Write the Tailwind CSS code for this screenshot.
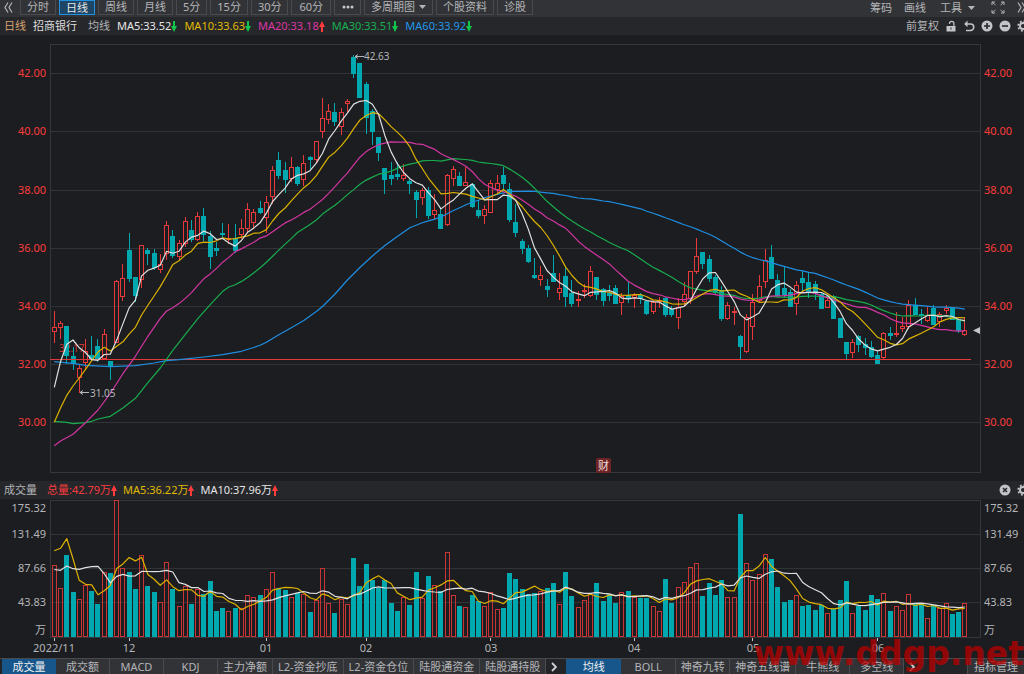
<!DOCTYPE html>
<html lang="zh-CN">
<head>
    <meta charset="UTF-8">
    <meta name="viewport" content="width=device-width, initial-scale=1.0">
    <title>招商银行 日线</title>
    <script src="https://cdn.jsdelivr.net/npm/@tailwindcss/browser@4"></script>
</head>
<body class="bg-[#1c1d20] text-[#b4b5b8] text-[11px] leading-[16px] font-['Noto_Sans','Noto_Sans_CJK_SC',sans-serif]">
<div class="relative flex h-screen flex-col overflow-hidden whitespace-nowrap">

    <!-- Toolbar -->
    <nav class="flex h-[17px] shrink-0 items-start justify-between bg-[#323337]">
        <div class="flex items-start gap-[3px]">
            <button class="flex h-[15px] w-[17px] items-center pl-1" aria-label="向左">
                <svg width="9" height="11" viewBox="0 0 9 11" fill="none" stroke="#b4b5b8" stroke-width="1.2"><path d="M4 .5 1 5.5l3 5M8 .5 5 5.5l3 5"/></svg>
            </button>
            <button class="h-[15px] border border-t-0 border-[#494a4e] px-1.5 leading-[14px]">分时</button>
            <button class="h-[15px] border border-[#2191e0] bg-[#1d4565] px-1.5 leading-[13px] text-[#e8e8e8]">日线</button>
            <button class="h-[15px] border border-t-0 border-[#494a4e] px-1.5 leading-[14px]">周线</button>
            <button class="h-[15px] border border-t-0 border-[#494a4e] px-1.5 leading-[14px]">月线</button>
            <button class="h-[15px] border border-t-0 border-[#494a4e] px-1.5 leading-[14px]">5分</button>
            <button class="h-[15px] border border-t-0 border-[#494a4e] px-1.5 leading-[14px]">15分</button>
            <button class="h-[15px] border border-t-0 border-[#494a4e] px-1.5 leading-[14px]">30分</button>
            <button class="h-[15px] border border-t-0 border-[#494a4e] px-[7px] leading-[14px]">60分</button>
            <button class="flex h-[15px] w-[27px] items-center justify-center border border-t-0 border-[#494a4e]" aria-label="更多">
                <svg width="12" height="4" viewBox="0 0 12 4" fill="#c8c9cb"><circle cx="2" cy="2" r="1.5"/><circle cx="6" cy="2" r="1.5"/><circle cx="10" cy="2" r="1.5"/></svg>
            </button>
            <button class="flex h-[15px] items-center gap-1 border border-t-0 border-[#494a4e] px-1.5 leading-[14px]">多周期图
                <svg width="7" height="4" viewBox="0 0 7 4" fill="#b4b5b8"><path d="M0 0h7L3.5 4z"/></svg>
            </button>
            <button class="h-[15px] border border-t-0 border-[#494a4e] px-1.5 leading-[14px]">个股资料</button>
            <button class="h-[15px] border border-t-0 border-[#494a4e] px-1.5 leading-[14px]">诊股</button>
        </div>
        <div class="flex h-[15px] items-center leading-[14px]">
            <button class="mr-3">筹码</button>
            <button class="mr-[14px]">画线</button>
            <button class="mr-4 flex items-center gap-1.5">工具
                <svg width="7" height="4" viewBox="0 0 7 4" fill="#b4b5b8"><path d="M0 0h7L3.5 4z"/></svg>
            </button>
            <button class="mr-3" aria-label="全屏">
                <svg width="14" height="13" viewBox="0 0 14 13" fill="none" stroke="#b4b5b8"><path d="M1 4V1h3M1 1l3.5 3M10 1h3v3M13 1 9.5 4M1 9v3h3M1 12l3.5-3M10 12h3V9M13 12 9.5 9"/></svg>
            </button>
            <button class="w-[7px] overflow-hidden" aria-label="向右">
                <svg class="max-w-none" width="9" height="11" viewBox="0 0 9 11" fill="none" stroke="#b4b5b8" stroke-width="1.2"><path d="m1 .5 3 5-3 5M5 .5l3 5-3 5"/></svg>
            </button>
        </div>
    </nav>

    <!-- Averages -->
    <header class="flex h-[18px] shrink-0 items-center justify-between bg-[#26272b] pl-1 leading-[18px]">
        <div class="flex items-center gap-[7px]">
            <span class="text-[#d9a470]">日线</span>
            <span class="text-[#dcdcdc]">招商银行</span>
            <span class="ml-1">均线</span>
            <span class="flex items-center text-[#e6e6e6]">MA5:33.52<svg width="6" height="11" viewBox="0 0 6 11" fill="#12c44c"><path d="M2 0h2v5h2L3 11 0 5h2z"/></svg></span>
            <span class="flex items-center text-[#e0bb00]">MA10:33.63<svg width="6" height="11" viewBox="0 0 6 11" fill="#12c44c"><path d="M2 0h2v5h2L3 11 0 5h2z"/></svg></span>
            <span class="flex items-center text-[#dc36a4]">MA20:33.18<svg width="6" height="11" viewBox="0 0 6 11" fill="#ff3b3b"><path d="M2 11h2V6h2L3 0 0 6h2z"/></svg></span>
            <span class="flex items-center text-[#18b050]">MA30:33.51<svg width="6" height="11" viewBox="0 0 6 11" fill="#12c44c"><path d="M2 0h2v5h2L3 11 0 5h2z"/></svg></span>
            <span class="flex items-center text-[#2196ea]">MA60:33.92<svg width="6" height="11" viewBox="0 0 6 11" fill="#12c44c"><path d="M2 0h2v5h2L3 11 0 5h2z"/></svg></span>
        </div>
        <div class="flex items-center gap-1.5">
            <button>前复权</button>
            <button aria-label="锁定"><svg width="12" height="12" viewBox="0 0 12 12"><path d="M1.5 6h9v5.5h-9z" fill="#c3c4c7"/><path d="M4.5 4V3.500a2.200 2.200 0 0 1 4.400 0V6" fill="none" stroke="#c3c4c7" stroke-width="1.2"/><path d="M5.500 7.500h1v2h-1z" fill="#26272b"/></svg></button>
            <button aria-label="撤销"><svg width="12" height="12" viewBox="0 0 12 12" fill="none" stroke="#c3c4c7" stroke-width="1.6"><path d="M2 4h5.500a3 3 0 0 1 0 6.500H3"/><path d="M4.500.500 1.200 4l3.300 3.300z" fill="#c3c4c7" stroke="none"/></svg></button>
            <button aria-label="放大"><svg width="12" height="12" viewBox="0 0 12 12"><circle cx="6" cy="6" r="5.500" fill="#c3c4c7"/><path d="M6 3v6M3 6h6" stroke="#26272b" stroke-width="1.6"/></svg></button>
            <button aria-label="缩小"><svg width="12" height="12" viewBox="0 0 12 12"><circle cx="6" cy="6" r="5.500" fill="#c3c4c7"/><path d="M3 6h6" stroke="#26272b" stroke-width="1.6"/></svg></button>
            <button class="w-[7px] overflow-hidden" aria-label="设置"><svg class="max-w-none" width="12" height="12" viewBox="0 0 12 12" fill="none" stroke="#c3c4c7"><circle cx="6" cy="6" r="3" stroke-width="2"/><circle cx="6" cy="6" r="4.8" stroke-width="1.8" stroke-dasharray="1.88 1.89"/></svg></button>
        </div>
    </header>

    <!-- Candles -->
    <section class="flex min-h-0 flex-1 pt-[9px] pb-2">
        <div class="grid h-[95%] w-[50px] shrink-0 grid-rows-7 items-center pr-1 text-right text-[#fa3c3c]">
            <span>42.00</span><span>40.00</span><span>38.00</span><span>36.00</span><span>34.00</span><span>32.00</span><span>30.00</span>
        </div>
        <svg id="price" class="min-w-0 flex-1" viewBox="50 44 931 429" preserveAspectRatio="none"></svg>
        <div class="grid h-[95%] w-[43px] shrink-0 grid-rows-7 items-center pl-[3px] text-[#fa3c3c]">
            <span>42.00</span><span>40.00</span><span>38.00</span><span>36.00</span><span>34.00</span><span>32.00</span><span>30.00</span>
        </div>
    </section>

    <!-- Volume -->
    <header class="flex h-[18px] shrink-0 items-center justify-between bg-[#26272b] pl-1 leading-[18px]">
        <div class="flex items-center gap-1.5">
            <span class="mr-1">成交量</span>
            <span class="flex items-center text-[#fa3c3c]">总量:42.79万<svg width="6" height="11" viewBox="0 0 6 11" fill="#ff3b3b"><path d="M2 11h2V6h2L3 0 0 6h2z"/></svg></span>
            <span class="flex items-center text-[#e0bb00]">MA5:36.22万<svg width="6" height="11" viewBox="0 0 6 11" fill="#ff3b3b"><path d="M2 11h2V6h2L3 0 0 6h2z"/></svg></span>
            <span class="flex items-center text-[#e6e6e6]">MA10:37.96万<svg width="6" height="11" viewBox="0 0 6 11" fill="#ff3b3b"><path d="M2 11h2V6h2L3 0 0 6h2z"/></svg></span>
        </div>
        <div class="flex items-center gap-1.5">
            <button aria-label="关闭"><svg width="12" height="12" viewBox="0 0 12 12"><circle cx="6" cy="6" r="5.5" fill="#c3c4c7"/><path d="m4 4 4 4M8 4 4 8" stroke="#26272b" stroke-width="1.5"/></svg></button>
            <button class="w-[7px] overflow-hidden" aria-label="设置"><svg class="max-w-none" width="12" height="12" viewBox="0 0 12 12" fill="none" stroke="#c3c4c7"><circle cx="6" cy="6" r="3" stroke-width="2"/><circle cx="6" cy="6" r="4.8" stroke-width="1.8" stroke-dasharray="1.88 1.89"/></svg></button>
        </div>
    </header>
    <section class="flex h-[159px] shrink-0 pt-px">
        <div class="flex w-[50px] shrink-0 flex-col pr-1 text-right">
            <span class="h-[17px]">175.32</span>
            <span class="h-[34px] leading-[34px]">131.49</span>
            <span class="h-[34px] leading-[34px]">87.66</span>
            <span class="h-[34px] leading-[34px]">43.83</span>
            <span class="h-[22px] leading-[22px]">万</span>
        </div>
        <svg id="volume" class="min-w-0 flex-1 overflow-visible" viewBox="50 500 931 158" preserveAspectRatio="none"></svg>
        <div class="flex w-[43px] shrink-0 flex-col pl-[3px]">
            <span class="h-[17px]">175.32</span>
            <span class="h-[34px] leading-[34px]">131.49</span>
            <span class="h-[34px] leading-[34px]">87.66</span>
            <span class="h-[34px] leading-[34px]">43.83</span>
            <span class="h-[22px] leading-[22px]">万</span>
        </div>
    </section>

    <!-- Indicator tabs -->
    <footer class="flex h-4 shrink-0 justify-between border-t border-[#494a4e] bg-[#232427] pl-0.5 leading-[14px]">
        <div class="flex">
            <button class="min-w-[54px] bg-[#17568a] text-[#f0f0f0]">成交量</button>
            <button class="min-w-[54px] border-r border-[#4a4b4f] bg-[#323337]">成交额</button>
            <button class="min-w-[54px] border-r border-[#4a4b4f] bg-[#323337]">MACD</button>
            <button class="min-w-[54px] border-r border-[#4a4b4f] bg-[#323337]">KDJ</button>
            <button class="min-w-[55px] border-r border-[#4a4b4f] bg-[#323337]">主力净额</button>
            <button class="border-r border-[#4a4b4f] bg-[#323337] px-[5px]">L2-资金抄底</button>
            <button class="border-r border-[#4a4b4f] bg-[#323337] px-[5px]">L2-资金仓位</button>
            <button class="border-r border-[#4a4b4f] bg-[#323337] px-[5px]">陆股通资金</button>
            <button class="border-r border-[#4a4b4f] bg-[#323337] px-[5px]">陆股通持股</button>
            <button class="mr-1 flex w-4 items-center justify-center" aria-label="更多指标">
                <svg width="6" height="10" viewBox="0 0 6 10" fill="none" stroke="#d0d1d3" stroke-width="1.8"><path d="m1 1 4 4-4 4"/></svg>
            </button>
            <button class="min-w-[55px] bg-[#17568a] text-[#f0f0f0]">均线</button>
            <button class="min-w-[55px] border-r border-[#4a4b4f] bg-[#323337]">BOLL</button>
            <button class="min-w-[54px] border-r border-[#4a4b4f] bg-[#323337]">神奇九转</button>
            <button class="border-r border-[#4a4b4f] bg-[#323337] px-[5px]">神奇五线谱</button>
            <button class="min-w-[54px] border-r border-[#4a4b4f] bg-[#323337]">牛熊线</button>
            <button class="min-w-[54px] border-r border-[#4a4b4f] bg-[#323337]">多空线</button>
            <button class="flex w-4 items-center justify-center" aria-label="更多均线">
                <svg width="6" height="10" viewBox="0 0 6 10" fill="none" stroke="#d0d1d3" stroke-width="1.8"><path d="m1 1 4 4-4 4"/></svg>
            </button>
        </div>
        <button class="border-l border-[#4a4b4f] bg-[#323337] px-1.5">指标管理</button>
    </footer>

    <!-- Watermark -->
    <div class="pointer-events-none absolute right-0 bottom-0 font-['DejaVu_Sans',sans-serif] text-[33px] leading-[40px] font-bold text-[#b80000]/75">www.ddgp.net</div>
</div>

<script>
    // one row per day: colour, high, body top, body bottom, low, volume top
    const days = `
r 311 327 331 342 565|r 321 323 327 338 588|t 326 326 355 363 555|t 347 356 363 369 592|r 365 368 377 392 599
r 339 351 362 368 585|t 336 355 359 360 591|t 339 346 358 361 604|r 329 334 358 359 572|t 361 361 366 379 573
r 280 281 342 342 500|r 264 278 296 300 568|t 233 250 278 281 572|t 277 277 295 301 589|r 245 245 279 287 555
t 248 250 253 264 586|t 249 253 267 269 592|r 254 264 269 272 602|r 221 225 253 259 562|t 230 236 255 257 589
r 240 243 256 259 606|r 217 221 243 246 586|t 220 230 239 241 604|r 212 216 239 240 589|t 208 216 234 240 594
t 231 236 256 268 581|t 242 248 250 255 611|t 223 233 234 237 608|r 224 238 239 243 611|t 224 238 250 252 608
r 219 228 234 238 608|r 203 209 228 232 595|r 209 212 222 228 597|t 201 208 212 213 595|r 196 202 217 232 589
r 166 170 196 203 572|t 152 160 175 178 588|t 162 170 179 192 590|r 157 167 178 181 597|t 166 167 183 185 593
r 155 163 179 185 594|t 156 157 159 168 612|r 141 141 159 161 600|r 98 118 131 137 568|r 104 111 119 123 603
t 103 112 121 125 613|r 108 112 126 134 599|r 99 101 103 111 604|t 55 57 73 77 558|t 63 63 97 97 586
t 82 84 117 133 564|t 109 111 131 144 580|t 137 137 152 160 588|t 168 168 179 193 580|t 162 175 178 184 603
t 162 174 176 179 611|r 164 175 178 180 597|t 178 181 183 193 605|t 190 192 199 217 572|r 188 190 197 204 598
t 187 190 215 218 576|r 194 210 214 218 585|t 208 214 228 228 591|r 174 175 224 225 552|r 166 169 178 185 595
t 172 176 185 185 606|r 167 182 185 185 607|t 183 184 206 207 595|t 200 210 215 217 601|r 205 209 215 223 606
r 180 183 212 212 592|r 175 183 189 193 609|t 167 175 183 190 608|t 183 189 219 221 573|t 204 222 232 236 579
t 239 241 248 253 589|t 245 248 261 262 594|t 258 275 277 278 593|r 266 275 279 285 591|t 279 286 289 296 588
t 255 273 281 281 583|r 273 288 292 299 604|t 267 276 296 306 572|t 280 293 303 306 596|r 291 299 300 306 607
r 284 290 291 297 600|r 266 271 295 296 594|t 277 277 294 299 583|t 288 289 300 305 601|t 285 293 295 300 594
t 285 288 303 303 603|r 293 296 302 314 592|t 281 295 298 302 591|r 293 295 297 307 597|t 293 295 298 303 598
t 300 301 313 314 598|r 300 302 311 313 606|r 297 300 301 307 611|t 297 298 314 316 579|t 306 309 314 316 603
r 298 307 317 328 587|r 282 294 301 305 582|r 271 271 298 303 567|r 238 256 271 273 563|t 252 252 263 268 596
t 255 259 278 281 583|t 275 277 292 293 595|t 286 290 318 320 580|r 302 305 318 319 597|r 307 311 312 324 597
t 335 336 346 359 514|r 314 317 351 352 563|r 294 302 326 339 580|r 275 286 300 302 574|r 249 260 281 287 554
t 245 257 278 278 559|t 274 280 295 296 587|t 267 288 294 297 602|t 289 292 306 306 600|r 281 285 303 314 595
t 271 278 282 291 606|t 272 282 292 297 605|t 281 284 293 299 610|t 293 294 308 308 605|r 297 300 307 307 613
t 295 296 318 318 609|t 318 318 337 337 600|t 342 342 353 359 581|r 339 342 352 357 613|t 335 336 344 351 606
t 338 344 347 354 610|t 341 347 356 357 595|t 351 355 363 363 599|r 332 333 357 358 593|t 327 333 335 339 611
r 312 333 334 336 606|r 317 326 328 331 610|r 300 305 326 328 594|t 298 305 314 314 604|t 309 314 315 323 604
r 307 315 320 321 618|t 305 308 324 324 605|r 312 314 321 326 608|r 305 308 310 313 603|t 307 308 319 319 614
t 320 320 330 332 612|r 317 330 334 335 603`.trim().split(/[|\n]/).map(row => {
        const [c, ...n] = row.split(' ');
        const [high, top, bottom, low, vol] = n.map(Number);
        return { up: c === 'r', high, top, bottom, low, vol };
    });

    const RED = '#e83a3a', TEAL = '#00a8b0', GRID = '#323337';
    const px = i => 54.3 + i * 6.237;
    const hline = (y, c = GRID) => `<path d="M50 ${y}H980" stroke="${c}"/>`;

    // moving average; seed holds the points before the first full window
    function average(values, n, seed, colour) {
        const pts = seed.map(([i, y]) => [px(i), y]);
        for (let i = n - 1; i < values.length; i++) {
            const sum = values.slice(i - n + 1, i + 1).reduce((a, b) => a + b, 0);
            pts.push([px(i), sum / n + 0.5]);
        }
        const d = pts.map(p => p[0].toFixed(1) + ',' + p[1].toFixed(1)).join(' ');
        return `<polyline points="${d}" fill="none" stroke="${colour}" stroke-width="1.2" stroke-linejoin="round"/>`;
    }

    // price
    let s = '<g shape-rendering="crispEdges">';
    [73.5, 131.5, 190.5, 248.5, 306.5, 364.5, 422.5].forEach(y => s += hline(y));
    s += `<rect x="50.5" y="44.5" width="930" height="428" fill="none" stroke="#36373b"/>`;
    s += `<text x="59" y="352" font-size="10" fill="#c93434">32.17</text>`;
    days.forEach((d, i) => {
        const x = Math.round(px(i) - 0.5);
        const c = d.up ? RED : TEAL;
        s += `<path d="M${x + .5} ${d.high}V${d.top}M${x + .5} ${d.bottom}V${d.low + 1}" stroke="${c}"/>`;
        const h = Math.max(d.bottom - d.top, 1);
        s += d.up
            ? `<rect x="${x - 1.5}" y="${d.top + .5}" width="4" height="${h}" fill="none" stroke="${c}"/>`
            : `<rect x="${x - 2}" y="${d.top}" width="5" height="${h + 1}" fill="${c}"/>`;
    });
    s += `<path d="M50 359.5H971" stroke="#e03a3a"/></g>`;
    const close = days.map(d => d.up ? d.top : d.bottom);
    s += average(close, 60, [[0,361.7],[3,363.3],[5,365.3],[9,366.7],[13,365.7],[16,363],[18,360.7],[20,359.7],[24,357],[27,354.7],[30,351.3],[32,347.5],[33,345.3],[34,342.3],[35,338.6],[36,334.8],[38,327.8],[40,320.5],[42,311.5],[43,306.5],[45,294],[47,280],[49,267.5],[51,256],[53,245.5],[55,236.5],[57,227.7]], '#1e8ee0');
    s += average(close, 30, [[0,421.3],[2,422.3],[3,423.7],[5,422.7],[6,421.3],[7,419],[9,416.3],[11,408],[13,398.3],[15,382.7],[17,368],[19,350.3],[21,334.3],[23,318.7],[25,304.7],[27,291.3],[28,287]], '#18ac4e');
    s += average(close, 20, [[0,445.7],[1,441],[3,434.3],[5,422.7],[7,410],[9,393.3],[11,373.7],[13,356.3],[15,336.3],[17,318.3],[18,311]], '#d236a2');
    s += average(close, 10, [[0,422.3],[1,408],[2,395.3],[3,386],[4,378],[5,369.3],[6,360.7],[7,352],[8,347.3]], '#dcb200');
    s += average(close, 5, [[0,387.3],[1,361.7],[2,344.3],[3,340]], '#e0e0e0');
    s += `<g font-size="10" fill="#b4b5b8"><text x="364" y="60">42.63</text><text x="90" y="397">31.05</text></g>`;
    s += `<path d="M355 56.5h9M358 54.5l-3 2 3 2M80 392.5h9M83 390.5l-3 2 3 2" fill="none" stroke="#b4b5b8"/>`;
    s += `<path d="M973 330.5l7-3.5v7z" fill="#c3c4c7"/>`;
    s += `<rect x="596" y="458" width="15" height="15" rx="2" fill="#6e2427"/><text x="598" y="470" font-size="11" fill="#f0dede">财</text>`;
    document.getElementById('price').innerHTML = s;

    // volume
    s = '<g shape-rendering="crispEdges">';
    [534.5, 568.5, 602.5].forEach(y => s += hline(y));
    s += `<rect x="50.5" y="500.5" width="930" height="137" fill="none" stroke="#36373b"/>`;
    days.forEach((d, i) => {
        const x = Math.round(px(i) - 0.5);
        s += d.up
            ? `<rect x="${x - 1.5}" y="${d.vol + .5}" width="4" height="${636 - d.vol}" fill="none" stroke="#c93434"/>`
            : `<rect x="${x - 2}" y="${d.vol}" width="5" height="${637 - d.vol}" fill="${TEAL}"/>`;
    });
    const months = [[0, '2022/11'], [12, '12'], [34, '01'], [50, '02'], [70, '03'], [93, '04'], [112, '05'], [132, '06']];
    months.forEach(([i]) => s += `<path d="M${Math.round(px(i) - .5) + .5} 638v3" stroke="#c3c4c7"/>`);
    s += '</g>';
    const vols = days.map(d => d.vol);
    s += average(vols, 5, [[0,550.7],[1,548.3],[2,538.7],[3,558.7]], '#dcb200');
    s += average(vols, 10, [[0,569.5],[1,570.3],[2,566],[3,568.7],[4,569.3],[5,567.7],[6,566.7],[7,566.3],[8,573.7]], '#e0e0e0');
    months.forEach(([i, t]) => s += `<text x="${Math.round(px(i))}" y="652" font-size="11" fill="#b4b5b8" text-anchor="middle">${t}</text>`);
    document.getElementById('volume').innerHTML = s;
</script>
</body>
</html>
